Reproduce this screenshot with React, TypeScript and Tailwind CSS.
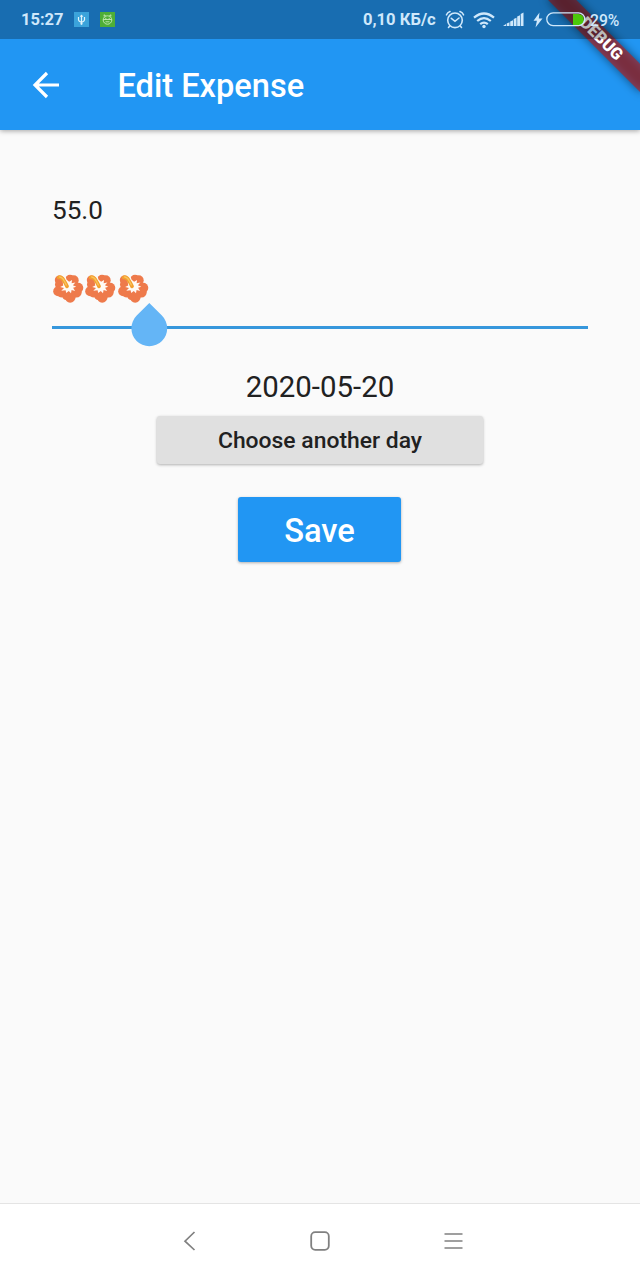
function Flower() {
  return (
    <svg width="32.4" height="34" viewBox="0 0 32.4 34" className="shrink-0">
      <g fill="#ee7a4b">
        <circle cx="7.400" cy="9" r="4.600" />
        <circle cx="7.500" cy="13.500" r="4.500" />
        <circle cx="18" cy="8.600" r="4.800" />
        <circle cx="21.700" cy="9.300" r="5" />
        <circle cx="26.200" cy="16.800" r="5.100" />
        <circle cx="24.500" cy="21.300" r="5.200" />
        <circle cx="18.200" cy="26.300" r="5.400" />
        <circle cx="14.500" cy="24.500" r="4.500" />
        <circle cx="6.200" cy="20.300" r="5" />
        <circle cx="9.300" cy="21.800" r="4.600" />
        <circle cx="16.300" cy="16.500" r="8.500" />
      </g>
      <path
        fill="#fffaf5"
        d="M13 4.500l1.700 4.300 2.400 1.900 3-1.700-.5 3.200 3.800-.8-2.500 2.900 3.400 1.400-3.200 1 2 3.300-3.500-1.100-.6 3.300-2.200-2.300-2.600 2.200-.6-2.900-4.300.5 2.700-2.700-3.800-1.100 3-1.500-.6-5 1.600-.4z"
      />
      <path d="M6.800 6.300Q9.500 5.800 11.500 9Q13.500 12 15 15.300" fill="none" stroke="#f3a02f" strokeWidth="3.800" strokeLinecap="round" />
      <path d="M7.500 5.800Q10.800 6.500 12.300 10L14.300 14" fill="none" stroke="#f8c45f" strokeWidth="1.300" strokeLinecap="round" />
    </svg>
  );
}

function DebugBanner() {
  return (
    <div className="pointer-events-none absolute top-0 right-0 z-10 h-[130px] w-[130px] overflow-hidden">
      <div className="absolute top-[29.400px] left-[25.500px] h-[19.600px] w-[130.600px] rotate-45">
        <div className="absolute inset-0 bg-black/50 blur-[5px]" />
        <div className="relative flex h-full items-center justify-center bg-[#b71c1c]/63 pt-[1px] text-[16.600px] leading-none font-black text-white">
          DEBUG
        </div>
      </div>
    </div>
  );
}

function StatusBar() {
  return (
    <div className="relative z-20 flex h-[39px] items-center bg-black/27 pl-[21px] text-[16.500px] leading-none font-bold text-[#cfe8fb]">
      <span className="w-[52.500px] pt-[2px]">15:27</span>
      <svg width="15" height="15" viewBox="0 0 15 15">
        <rect width="15" height="15" fill="#3ba3db" />
        <path d="M7.500 3v9M4.500 5v3q0 1 3 2.500Q10.500 9 10.500 8V5" fill="none" stroke="#e2f4fc" strokeWidth="1.200" />
        <path d="M5.700 4.800l1.800-2.400 1.800 2.400z" fill="#e2f4fc" />
        <circle cx="7.500" cy="11.800" r="1.100" fill="#e2f4fc" />
      </svg>
      <svg width="15" height="15" viewBox="0 0 15 15" className="ml-[11px]">
        <rect width="15" height="15" fill="#4eae37" />
        <g fill="none" stroke="#c8ebb9" strokeWidth=".9">
          <path d="M4.300 4.700L4 2.800l1.800 1.100M10.700 4.700l.3-1.900-1.800 1.100" />
          <ellipse cx="7.500" cy="8" rx="4.300" ry="4.200" />
          <path d="M3.300 7.500h8.400M5.500 9.800h4M5.800 5.800v1.700M9.200 5.800v1.700" />
        </g>
      </svg>
      <span className="ml-[248.500px] w-[82px] pt-[2px] text-[16.600px] whitespace-nowrap">0,10 КБ/с</span>
      <svg width="20" height="20" viewBox="0 0 20 20" fill="none" stroke="#cfe8fb" strokeWidth="1.600" strokeLinecap="round">
        <circle cx="10" cy="10.300" r="7.300" />
        <path d="M1.500 4.800Q2.500 2.300 5 1.500M18.500 4.800Q17.500 2.300 15 1.500M6.300 8.300l3.700 3 4-3.300M4.700 16l-1.200 1.400M15.300 16l1.200 1.400" />
      </svg>
      <svg width="22" height="18" viewBox="0 0 22 18" fill="none" stroke="#cfe8fb" strokeWidth="2.200" className="ml-[7.500px]">
        <path d="M1 6.700Q11-1.700 21 6.700M4.200 10Q11 4.200 17.800 10M7.200 13.200Q11 10 14.800 13.200" />
        <circle cx="11" cy="15.500" r="1.700" fill="#cfe8fb" stroke="none" />
      </svg>
      <svg width="21" height="15" viewBox="0 0 21 15" fill="#cfe8fb" className="ml-[8.500px]">
        <path d="M0 14l3-2v2zM3.700 11.500l2.800-1.200V14H3.700zM7.200 9.500L10 8.200V14H7.200zM10.700 7l2.800-1.200V14h-2.800zM14.200 4.500L17 3.200V14h-2.800zM17.700 2l2.800-1.500V14h-2.800z" />
      </svg>
      <svg width="10" height="16" viewBox="0 0 10 16" fill="#cfe8fb" className="ml-[8.500px]">
        <path d="M6.500.5L.5 8.700h3.400L2.500 15.500 9.500 6.500H5.800z" />
      </svg>
      <svg width="40" height="15" viewBox="0 0 40 15" className="ml-[3.500px]">
        <path d="M27 2h5.300a5.500 5.500 0 0 1 0 11H27z" fill="#4cc80a" />
        <rect x=".8" y=".9" width="38" height="12.700" rx="6.350" fill="none" stroke="#cfe8fb" strokeWidth="1.300" />
      </svg>
      <span className="ml-[4px] pt-[2px] text-[15.700px] font-medium">29%</span>
    </div>
  );
}

export default function App() {
  return (
    <div className="flex h-[1280px] w-[640px] flex-col overflow-hidden bg-[#fafafa] font-['Roboto',sans-serif] text-[#212121]">
      <header className="relative z-10 h-[130px] shrink-0 bg-[#2196f3] shadow-[0_1px_5px_rgba(0,0,0,0.35)]">
        <StatusBar />
        <DebugBanner />
        <div className="flex h-[91px] items-center pl-[32px] text-white">
          <svg width="28" height="28" viewBox="0 0 28 28" fill="none" stroke="white" strokeWidth="3.200" className="shrink-0">
            <path d="M27 14H3M15 2L3 14l12 12" />
          </svg>
          <h1 className="ml-[57.500px] pt-[4px] text-[32.600px] leading-none font-medium">Edit Expense</h1>
        </div>
      </header>

      <main className="flex flex-1 flex-col items-center px-[52px] pt-[65px]">
        <div className="h-[30px] w-full text-[26.100px] leading-[30px]">55.0</div>
        <div className="relative mt-[46px] flex h-[58px] w-full items-start border-b-[3px] border-[#3697dc]">
          <Flower />
          <Flower />
          <Flower />
          <svg width="37" height="44" viewBox="0 0 37 44" className="absolute top-[32px] left-[79px]">
            <path d="M18.300 0L30.900 12.600A17.900 17.900 0 1 1 5.700 12.600z" fill="#64b5f6" />
          </svg>
        </div>
        <div className="mt-[41px] h-[34px] text-[29.400px] leading-[34px]">2020-05-20</div>
        <button className="mt-[12px] h-[48px] w-[326px] rounded-[3px] bg-[#e0e0e0] pt-[2px] text-[22.900px] leading-none font-medium shadow-[0_1px_3px_rgba(0,0,0,0.3)]">
          Choose another day
        </button>
        <button className="mt-[33px] mr-[1px] h-[65px] w-[163px] rounded-[3px] bg-[#2196f3] pt-[4px] text-[32.700px] leading-none font-medium text-white shadow-[0_1px_3px_rgba(0,0,0,0.3)]">
          Save
        </button>
      </main>

      <nav className="flex h-[77px] shrink-0 items-center border-t border-[#e4e4e4] bg-white pb-[2px] pl-[183px]">
        <svg width="13" height="20" viewBox="0 0 13 20" fill="none" stroke="#808080" strokeWidth="1.700">
          <path d="M11.500 1L2 10.200l9.500 8.800" />
        </svg>
        <svg width="20" height="20" viewBox="0 0 20 20" fill="none" stroke="#808080" strokeWidth="1.800" className="ml-[114px]">
          <rect x="1.200" y="1.200" width="17.600" height="17.600" rx="4" />
        </svg>
        <svg width="19" height="18" viewBox="0 0 19 18" fill="none" stroke="#808080" strokeWidth="1.700" className="ml-[114px]">
          <path d="M.5 2h18M.5 9h18M.5 16h18" />
        </svg>
      </nav>
    </div>
  );
}
